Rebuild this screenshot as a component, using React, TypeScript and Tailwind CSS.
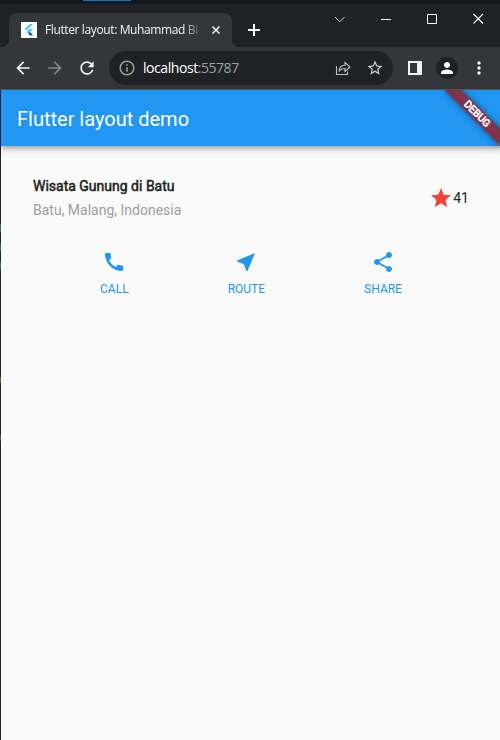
import React from 'react';
import { MdCall, MdNearMe, MdShare, MdStar, MdArrowBack, MdArrowForward, MdRefresh, MdStarBorder, MdInfoOutline, MdPerson, MdMoreVert } from 'react-icons/md';

function FlutterLogo() {
  return (
    <span className="flex h-4 w-4 shrink-0 items-center justify-center bg-white">
      <svg width="16" height="16" viewBox="0 0 16 16">
        <path d="M8.700 2h3.300L5.300 8.700 3.600 7z" fill="#54c5f8" />
        <path d="M8.700 6.900h3.300L9 9.900 7.300 11.600 5.600 9.900z" fill="#40c4ff" />
        <path d="M7.300 11.600 9 9.900l3 3.600H9.200z" fill="#01479b" />
      </svg>
    </span>
  );
}

function TabStrip() {
  return (
    <div className="flex h-[43px] bg-[#202124]">
      <div className="relative ml-[9px] mt-[9px] flex h-[34px] w-[223px] items-center rounded-t-lg bg-[#35363a] pl-3">
        <span className="absolute -left-2 bottom-0 h-2 w-2 bg-[radial-gradient(circle_at_0_0,transparent_8px,#35363a_8.5px)]" />
        <span className="absolute -right-2 bottom-0 h-2 w-2 bg-[radial-gradient(circle_at_100%_0,transparent_8px,#35363a_8.5px)]" />
        <FlutterLogo />
        <span className="ml-2 w-[156px] whitespace-nowrap font-['Open_Sans','Noto_Sans',sans-serif] text-[12px] leading-4 tracking-[-0.38px] text-[#f1f3f4] [mask-image:linear-gradient(to_right,black_138px,transparent_158px)]">
          Flutter layout: Muhammad Bi
        </span>
        <svg className="ml-[10px]" width="10" height="10" viewBox="0 0 10 10" stroke="#f1f3f4" strokeWidth="1.6">
          <path d="M1.5 1.5l7 7M8.5 1.5l-7 7" />
        </svg>
      </div>
      <svg className="ml-[15px] mt-[19px]" width="14" height="14" viewBox="0 0 14 14" stroke="white" strokeWidth="2">
        <path d="M7 1v12M1 7h12" />
      </svg>
      <div className="ml-auto mr-4 mt-2 flex h-[14px] items-center gap-[35px]">
        <svg width="11" height="11" viewBox="0 0 11 11" fill="none" stroke="#d0d0d0">
          <path d="M1 3l4.800 4.800L10.600 3" />
        </svg>
        <svg width="11" height="11" viewBox="0 0 11 11" stroke="white">
          <path d="M1 5.500h10" />
        </svg>
        <svg width="11" height="11" viewBox="0 0 11 11" fill="none" stroke="white">
          <path d="M1.500.500h9v9h-9z" />
        </svg>
        <svg width="12" height="12" viewBox="0 0 12 12" stroke="white" strokeWidth="1.1">
          <path d="M1.500 1l9.500 9.500M11 1L1.500 10.500" />
        </svg>
      </div>
    </div>
  );
}

function Toolbar() {
  return (
    <div className="flex h-[42px] items-center bg-[#35363a] pl-[13px] text-[#f1f3f4]">
      <MdArrowBack size={20} />
      <MdArrowForward size={20} className="ml-3 text-[#85868a]" />
      <MdRefresh size={20} className="ml-3" />
      <div className="ml-3 flex h-[34px] w-[284px] items-center rounded-full bg-[#202124] pl-[9px] pr-[9px]">
        <MdInfoOutline size={18} className="text-[#9aa0a6]" />
        <span className="ml-[7px] whitespace-nowrap font-['Open_Sans','Noto_Sans',sans-serif] text-[14px] leading-5 tracking-[-0.44px] text-white">
          localhost<span className="text-[#9aa0a6]">:55787</span>
        </span>
        <svg className="ml-auto" width="16" height="16" viewBox="0 0 16 16" fill="none" stroke="#bdc1c6" strokeWidth="1.1">
          <path d="M1.500 6v8.500h11v-3" />
          <path d="M4 11.500c.2-4 2-6 6-6.200V2.500l5 4.500-5 4.500V8.500c-3 0-4.700.900-6 3z" />
        </svg>
        <MdStarBorder size={18} className="ml-[15px] text-[#d0d2d5]" />
      </div>
      <svg className="ml-[14px]" width="16" height="16" viewBox="0 0 16 16">
        <path fillRule="evenodd" d="M1 1h14v14H1zM3 3v10h7V3z" fill="#f1f3f4" />
      </svg>
      <span className="ml-[13px] flex h-[22px] w-[22px] items-center justify-center rounded-full bg-[#202124]">
        <MdPerson size={18} className="text-white" />
      </span>
      <MdMoreVert size={20} className="ml-[11px]" />
    </div>
  );
}

function AppBar() {
  return (
    <header className="relative z-10 flex h-14 items-center bg-[#2196f3] px-4 shadow-[0_2px_4px_-1px_rgba(0,0,0,.2),0_4px_5px_0_rgba(0,0,0,.14),0_1px_10px_0_rgba(0,0,0,.12)]">
      <h1 className="mt-0.5 text-[20px] font-normal leading-6 text-white">Flutter layout demo</h1>
    </header>
  );
}

function DebugBanner() {
  return (
    <div className="pointer-events-none absolute right-0 top-0 z-20 h-20 w-20 overflow-hidden">
      <div className="absolute left-full top-0 h-0 w-0 rotate-45">
        <div className="absolute -left-10 top-7 h-3 w-20 shadow-[0_0_6px_rgba(0,0,0,.5)]" />
        <div className="absolute -left-10 top-7 flex h-3 w-20 items-center justify-center bg-[#7f344c]">
          <span className="text-[10.2px] font-normal leading-3 text-white [-webkit-text-stroke:0.6px_white]">DEBUG</span>
        </div>
      </div>
    </div>
  );
}

// One-pixel strip of the window behind, with the marks that show through it.
const edgeMarks = [
  { top: 134, height: 8, color: '#34703a' },
  { top: 153, height: 8, color: '#34703a' },
  { top: 172, height: 8, color: '#34703a' },
  { top: 287, height: 6, color: '#6b6128' },
  { top: 345, height: 6, color: '#2c5873' },
];

function WindowEdge() {
  return (
    <div className="relative w-px shrink-0 bg-[#23222c]">
      {edgeMarks.map((m) => (
        <span key={m.top} className="absolute left-0 w-px" style={{ top: m.top, height: m.height, background: m.color }} />
      ))}
    </div>
  );
}

function ActionButton({ icon, label }: { icon: React.ReactNode; label: string }) {
  return (
    <div className="flex flex-col items-center gap-2 text-[#2196f3]">
      {icon}
      <span className="text-[12px] leading-[14px]">{label}</span>
    </div>
  );
}

export default function App() {
  return (
    <div className="flex h-[740px] w-[500px] flex-col overflow-hidden bg-[#202124] font-[Roboto,sans-serif]">
      <div className="h-1 bg-[#17181e]">
        <div className="ml-[83px] h-px w-12 bg-[#0078d7]" />
      </div>
      <TabStrip />
      <Toolbar />
      <div className="h-px bg-[#5b5c60]" />
      <div className="flex grow">
        <WindowEdge />
        <div className="relative w-[500px] shrink-0 bg-[#fafafa]">
          <AppBar />
          <DebugBanner />
          <section className="flex items-center p-8">
            <div className="flex grow flex-col gap-2">
              <h2 className="text-[14px] font-normal leading-4 text-[#212121] [-webkit-text-stroke:0.5px_#212121]">Wisata Gunung di Batu</h2>
              <p className="text-[14px] leading-4 text-[#9e9e9e]">Batu, Malang, Indonesia</p>
            </div>
            <MdStar size={24} className="text-[#f44336]" />
            <span className="text-[14px] leading-4 text-[#212121]">41</span>
          </section>
          <section className="flex justify-evenly">
            <ActionButton icon={<MdCall size={24} />} label="CALL" />
            <ActionButton icon={<MdNearMe size={24} />} label="ROUTE" />
            <ActionButton icon={<MdShare size={24} />} label="SHARE" />
          </section>
        </div>
      </div>
    </div>
  );
}
